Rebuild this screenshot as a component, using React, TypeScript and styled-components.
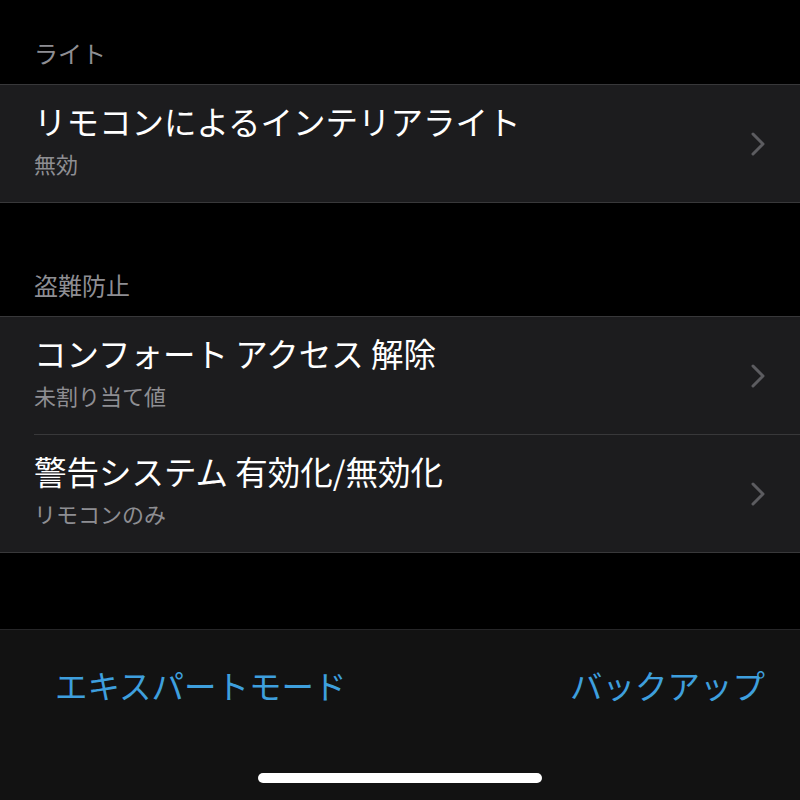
import React from "react";
import styled, { createGlobalStyle } from "styled-components";

const Global = createGlobalStyle`
  html, body { margin: 0; padding: 0; background: #000; }
  body {
    font-family: "Noto Sans CJK JP", "Noto Sans", sans-serif;
    -webkit-font-smoothing: antialiased;
  }
`;

const Screen = styled.div`
  width: 800px;
  height: 800px;
  background: #000;
  display: flex;
  flex-direction: column;
  overflow: hidden;
`;

const SectionHeader = styled.div<{ $h: number }>`
  height: ${(p) => p.$h}px;
  box-sizing: border-box;
  padding: 0 34px 16px;
  display: flex;
  align-items: flex-end;
  color: #8e8e93;
  font-size: 24px;
  line-height: 30px;
`;

const Group = styled.div`
  background: #1c1c1e;
  border-top: 1px solid #38383a;
  border-bottom: 1px solid #38383a;
`;

const Row = styled.div<{ $divider?: boolean }>`
  height: 117px;
  margin-left: 34px;
  padding-right: 34px;
  display: flex;
  align-items: center;
  border-top: ${(p) => (p.$divider ? "1px solid #38383a" : "none")};
`;

const Texts = styled.div`
  flex: 1;
  display: flex;
  flex-direction: column;
  gap: 6px;
  padding-bottom: 10px;
`;

const Title = styled.div`
  color: #fff;
  font-size: 32.5px;
  line-height: 42px;
`;

const Subtitle = styled.div`
  color: #8e8e93;
  font-size: 22px;
  line-height: 30px;
`;

const Chevron = styled.svg`
  width: 16px;
  height: 24px;
  flex: none;
  margin-bottom: 0px;
`;

const Spacer = styled.div`
  height: 76px;
`;

const Footer = styled.div`
  flex: 1;
  background: #121212;
  border-top: 1px solid #262628;
  display: flex;
  flex-direction: column;
  align-items: center;
`;

const Links = styled.div`
  align-self: stretch;
  display: flex;
  justify-content: space-between;
  padding: 34px 35px 0 55px;
`;

const Link = styled.span`
  color: #3e9fdd;
  font-size: 32.5px;
  line-height: 42px;
`;

const HomeBar = styled.div`
  width: 284px;
  height: 10px;
  border-radius: 5px;
  background: #fff;
  margin-top: auto;
  margin-bottom: 17px;
`;

const Arrow = () => (
  <Chevron viewBox="0 0 16 24">
    <path d="M3 2 L13 12 L3 22" fill="none" stroke="#5c5c60" strokeWidth="3" strokeLinecap="round" strokeLinejoin="round" />
  </Chevron>
);

const Item = ({ title, sub, divider }: { title: string; sub: string; divider?: boolean }) => (
  <Row $divider={divider}>
    <Texts>
      <Title>{title}</Title>
      <Subtitle>{sub}</Subtitle>
    </Texts>
    <Arrow />
  </Row>
);

export default function App() {
  return (
    <>
      <Global />
      <Screen>
        <SectionHeader $h={84}>ライト</SectionHeader>
        <Group>
          <Item title="リモコンによるインテリアライト" sub="無効" />
        </Group>
        <SectionHeader $h={113}>盗難防止</SectionHeader>
        <Group>
          <Item title="コンフォート アクセス 解除" sub="未割り当て値" />
          <Item title="警告システム 有効化/無効化" sub="リモコンのみ" divider />
        </Group>
        <Spacer />
        <Footer>
          <Links>
            <Link>エキスパートモード</Link>
            <Link>バックアップ</Link>
          </Links>
          <HomeBar />
        </Footer>
      </Screen>
    </>
  );
}
